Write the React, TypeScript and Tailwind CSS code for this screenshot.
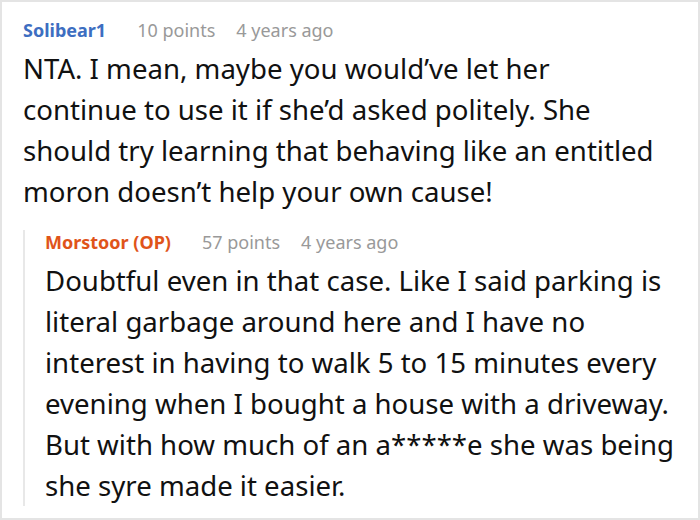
const FONT = { fontFamily: '"Noto Sans", "Open Sans", sans-serif' };

interface Comment {
  author: string;
  op?: boolean;
  points: number;
  age: string;
  lines: string[];
}

const parent: Comment = {
  author: "Solibear1",
  points: 10,
  age: "4 years ago",
  lines: [
    "NTA. I mean, maybe you would\u2019ve let her",
    "continue to use it if she\u2019d asked politely. She",
    "should try learning that behaving like an entitled",
    "moron doesn\u2019t help your own cause!",
  ],
};

const reply: Comment = {
  author: "Morstoor (OP)",
  op: true,
  points: 57,
  age: "4 years ago",
  lines: [
    "Doubtful even in that case. Like I said parking is",
    "literal garbage around here and I have no",
    "interest in having to walk 5 to 15 minutes every",
    "evening when I bought a house with a driveway.",
    "But with how much of an a*****e she was being",
    "she syre made it easier.",
  ],
};

function CommentBlock({ c }: { c: Comment }) {
  return (
    <div>
      <div className="flex items-center text-[18px] leading-[24px]">
        <span className={`font-bold ${c.op ? "text-[#e0541a]" : "text-[#3d6ec1]"}`}>{c.author}</span>
        <span className="ml-[31px] text-[#999999]">{c.points} points</span>
        <span className="ml-[21px] text-[#999999]">{c.age}</span>
      </div>
      <div className="mt-[6px] text-[27.6px] leading-[41px] text-[#111111]">
        {c.lines.map((l, i) => (
          <div key={i} className="whitespace-nowrap">
            {l}
          </div>
        ))}
      </div>
    </div>
  );
}

export default function App() {
  return (
    <div style={FONT} className="h-[520px] w-[700px] overflow-hidden bg-white">
      <div className="h-full w-full border-2 border-[#e4e4e4] px-[21px] pt-[16px]">
        <CommentBlock c={parent} />
        <div className="mt-[38px] border-l-2 border-[#e8e8e8] pl-[20px]">
          <div className="-mt-[20px]">
            <CommentBlock c={reply} />
          </div>
        </div>
      </div>
    </div>
  );
}
